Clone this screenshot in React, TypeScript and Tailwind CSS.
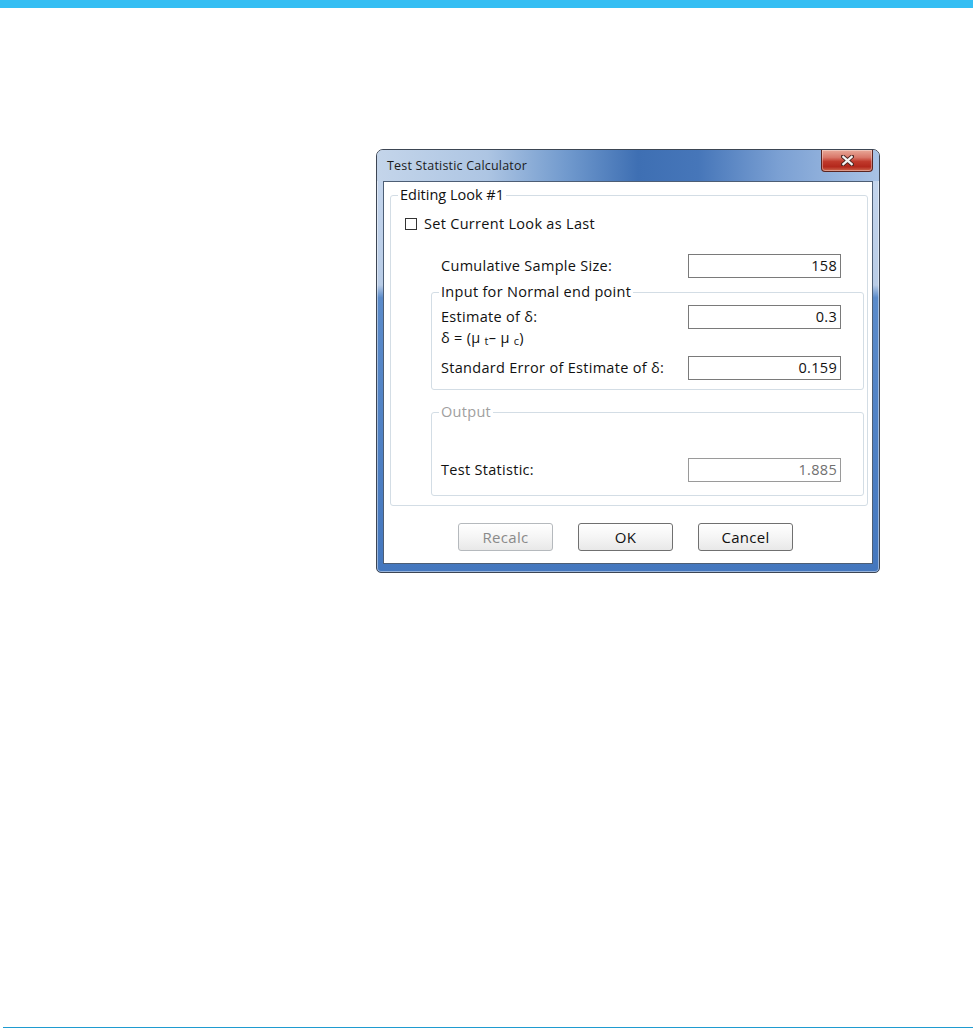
import React from "react";

const font = { fontFamily: '"Open Sans", "Noto Sans", sans-serif' };

function Field({ value, muted }: { value: string; muted?: boolean }) {
  return (
    <div
      className={`w-[153px] h-[24px] border bg-white flex items-center justify-end pr-[3px] text-[14.5px] tracking-[0.3px] ${
        muted ? "border-[#9a9a9a] text-[#707070]" : "border-[#7a7a7a] text-[#111]"
      }`}
    >
      {value}
    </div>
  );
}

function Row({ label, value, muted }: { label: React.ReactNode; value: string; muted?: boolean }) {
  return (
    <div className="flex items-center justify-between h-[24px]">
      <span className="text-[14.5px] tracking-[0.3px] text-[#111]">{label}</span>
      <Field value={value} muted={muted} />
    </div>
  );
}

function DialogButton({ children, disabled }: { children: React.ReactNode; disabled?: boolean }) {
  return (
    <button
      className={`w-[95px] h-[28px] rounded-[3px] border text-[15px] tracking-[0.3px] bg-[linear-gradient(to_bottom,#ffffff_0%,#f5f5f5_50%,#e8e8e8_100%)] ${
        disabled ? "border-[#b5b9bd] text-[#8a8a8a]" : "border-[#707070] text-[#111]"
      }`}
    >
      {children}
    </button>
  );
}

function CloseButton() {
  return (
    <div className="w-[52px] h-[22px] rounded-b-[4px] border border-t-0 border-[#5a2420] bg-[linear-gradient(to_bottom,#e9a999_0%,#d9786a_35%,#c0392b_55%,#b3281c_80%,#cf6a50_100%)] flex items-center justify-center shadow-[inset_0_0_0_1px_rgba(255,255,255,0.35)]">
      <svg width="13" height="11" viewBox="0 0 13 11">
        <path d="M2 1.5 L11 9.5 M11 1.5 L2 9.5" stroke="#4a2420" strokeWidth="4" strokeLinecap="square" />
        <path d="M2.3 1.8 L10.7 9.2 M10.7 1.8 L2.3 9.2" stroke="#f4f4f4" strokeWidth="2.2" strokeLinecap="square" />
      </svg>
    </div>
  );
}

export default function App() {
  return (
    <div className="w-[973px] h-[1028px] bg-white flex flex-col" style={font}>
      <div className="h-[8px] bg-[#35bef3]" />

      <div className="pt-[141px] pl-[376px]">
        <div className="w-[504px] rounded-t-[7px] rounded-b-[5px] border border-[#3d4654] bg-[linear-gradient(to_bottom,#c6d7ee_0%,#b9cce6_32%,#5b8bca_35%,#4477be_100%)] shadow-[inset_0_0_0_1px_rgba(255,255,255,0.45)] overflow-hidden">
          <div className="h-[31px] flex items-start justify-between pl-[10px] pr-[6px] bg-[linear-gradient(to_right,#c4d5ea_0%,#adc5e3_22%,#7099cd_38%,#3e6fb3_52%,#4676b9_64%,#7ba0d3_80%,#a9c3e5_100%)]">
            <span className="text-[12.5px] tracking-[0.2px] text-[#1b1b1b] leading-[31px]">Test Statistic Calculator</span>
            <CloseButton />
          </div>

          <div className="px-[6px] pb-[8px]">
            <div className="border border-[#4d5e75] bg-white pl-[6px] pr-[4px] pt-[3px] pb-[12px]">
              <fieldset className="border border-[#d3dde5] rounded-[3px] pb-[9px]">
                <legend className="ml-[7px] px-[2px] text-[14.5px] leading-[20px] text-[#111]">Editing Look #1</legend>

                <div className="mt-[9px] h-[20px] pl-[14px] flex items-center gap-[7px]">
                  <span className="w-[12px] h-[12px] border border-[#333] bg-white" />
                  <span className="text-[14.5px] tracking-[0.3px] text-[#111]">Set Current Look as Last</span>
                </div>

                <div className="mt-[20px] pl-[50px] pr-[26px]">
                  <Row label="Cumulative Sample Size:" value="158" />
                </div>

                <fieldset className="mt-[4px] ml-[40px] mr-[3px] border border-[#d3dde5] rounded-[3px] pl-[9px] pr-[22px] pb-[9px]">
                  <legend className="ml-[-2px] px-[2px] text-[14.5px] tracking-[0.3px] leading-[20px] text-[#111]">
                    Input for Normal end point
                  </legend>
                  <div className="mt-[3px]">
                    <Row label="Estimate of δ:" value="0.3" />
                  </div>
                  <div className="h-[18px] flex items-center text-[14.5px] tracking-[0.3px] text-[#111]">
                    δ = (μ<sub className="ml-[4px] text-[11px]">t</sub>– μ<sub className="ml-[4px] text-[11px]">c</sub>)
                  </div>
                  <div className="mt-[9px]">
                    <Row label="Standard Error of Estimate of δ:" value="0.159" />
                  </div>
                </fieldset>

                <fieldset className="mt-[12px] ml-[40px] mr-[3px] border border-[#d3dde5] rounded-[3px] pl-[9px] pr-[22px] pb-[13px]">
                  <legend className="ml-[-2px] px-[2px] text-[14.5px] tracking-[0.3px] leading-[20px] text-[#a0a0a0]">Output</legend>
                  <div className="mt-[36px]">
                    <Row label="Test Statistic:" value="1.885" muted />
                  </div>
                </fieldset>
              </fieldset>

              <div className="mt-[17px] pl-[68px] flex gap-[25px]">
                <DialogButton disabled>Recalc</DialogButton>
                <DialogButton>OK</DialogButton>
                <DialogButton>Cancel</DialogButton>
              </div>
            </div>
          </div>
        </div>
      </div>

      <div className="mt-auto ml-[3px] h-px bg-[#1f9bd0]" />
    </div>
  );
}
